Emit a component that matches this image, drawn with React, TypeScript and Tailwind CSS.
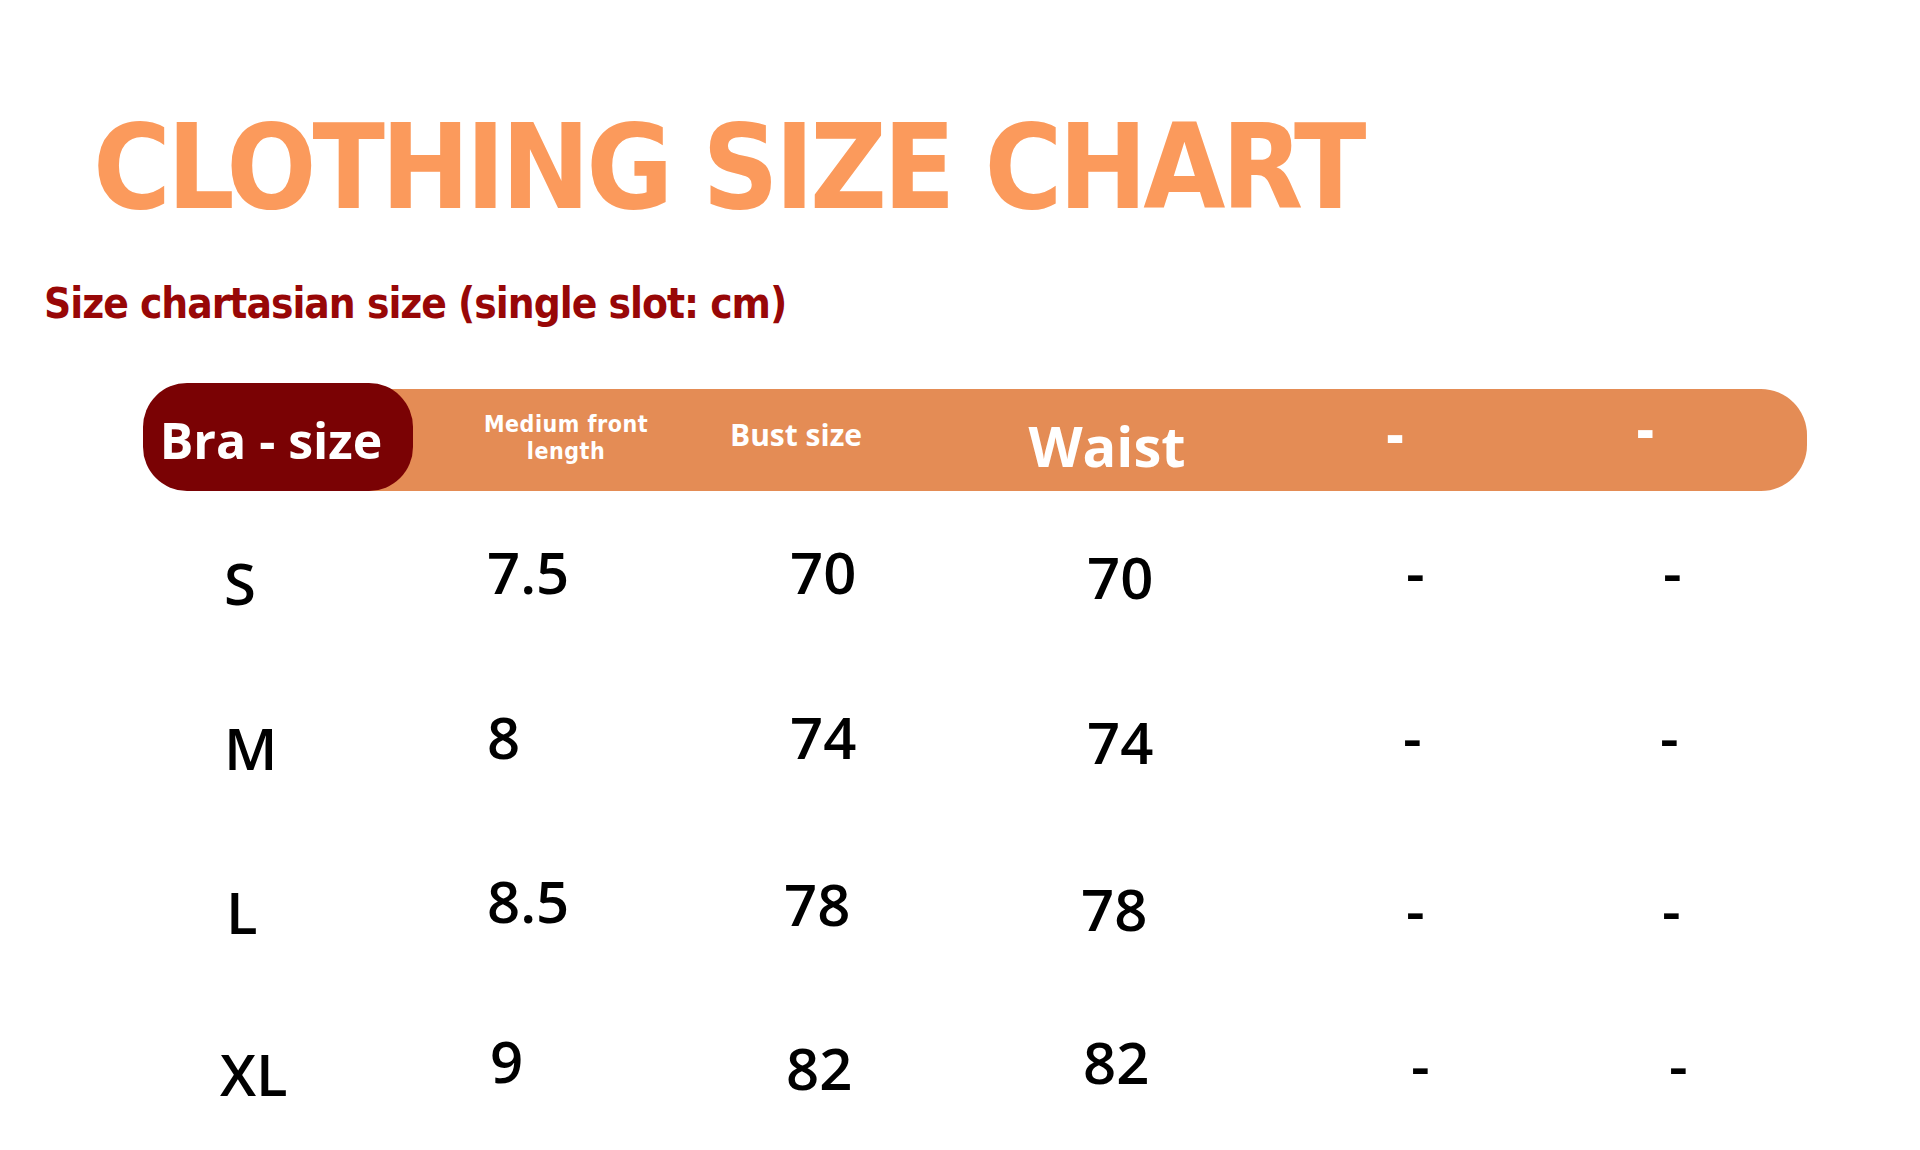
const condensed = "font-['DejaVu_Sans_Condensed','DejaVu_Sans',sans-serif] [font-stretch:semi-condensed]";
const open = "font-['Open_Sans','Noto_Sans',sans-serif]";

type Cell = { text: string; cls: string };

const rows: Cell[][] = [
  [
    { text: "S", cls: "w-[263px] pt-[33px]" },
    { text: "7.5", cls: "w-[303px] pt-[22px]" },
    { text: "70", cls: "w-[297px] pt-[22px]" },
    { text: "70", cls: "w-[319px] pt-[27px]" },
    { text: "-", cls: "w-[257px] pt-[22px]" },
    { text: "-", cls: "w-[120px] pt-[22px]" },
  ],
  [
    { text: "M", cls: "w-[263px] pt-[34px]" },
    { text: "8", cls: "w-[303px] pt-[23px]" },
    { text: "74", cls: "w-[297px] pt-[23px]" },
    { text: "74", cls: "w-[319px] pt-[28px]" },
    { text: "-", cls: "w-[257px] pt-[23px] -ml-[3px]" },
    { text: "-", cls: "w-[120px] pt-[23px]" },
  ],
  [
    { text: "L", cls: "w-[263px] pt-[34px] pl-[2px]" },
    { text: "8.5", cls: "w-[303px] pt-[23px]" },
    { text: "78", cls: "w-[297px] pt-[26px] -ml-[6px]" },
    { text: "78", cls: "w-[319px] pt-[31px]" },
    { text: "-", cls: "w-[257px] pt-[32px] pl-[6px]" },
    { text: "-", cls: "w-[120px] pt-[32px] pl-[5px]" },
  ],
  [
    { text: "XL", cls: "w-[263px] pt-[32px] -ml-[4px]" },
    { text: "9", cls: "w-[303px] pt-[19px] pl-[7px]" },
    { text: "82", cls: "w-[297px] pt-[26px]" },
    { text: "82", cls: "w-[319px] pt-[20px]" },
    { text: "-", cls: "w-[257px] pt-[23px] pl-[9px]" },
    { text: "-", cls: "w-[120px] pt-[23px] pl-[10px]" },
  ],
];

const App = () => {
  return (
    <div className="w-[1920px] h-[1150px] bg-white overflow-hidden flex flex-col">
      <h1 className={`${condensed} font-bold text-[118px] leading-none tracking-[-4px] text-[#fb9a5c] pl-[93px] pt-[108px]`}>
        CLOTHING SIZE CHART
      </h1>
      <div className={`${condensed} font-bold text-[42px] leading-none tracking-[-1px] text-[#980707] pl-[44px] mt-[57px]`}>
        Size chartasian size (single slot: cm)
      </div>

      <div className="ml-[143px] mt-[58px] w-[1664px] h-[108px] flex items-end">
        <div className={`${open} relative z-10 shrink-0 w-[270px] h-[108px] rounded-[44px] bg-[#7a0204] text-white font-bold text-[50px] flex items-center justify-center pr-[14px] pt-[6px]`}>
          Bra - size
        </div>
        <div className={`${open} -ml-[60px] pl-[60px] h-[102px] flex-1 min-w-0 bg-[#e48c55] rounded-r-[46px] flex items-center text-white font-bold`}>
          <div className={`${condensed} w-[306px] shrink-0 text-center text-[23px] leading-[27px] tracking-[0.5px] -mt-[4px]`}>
            <div>Medium front</div>
            <div>length</div>
          </div>
          <div className="w-[154px] shrink-0 text-center text-[30px] -mt-[12px]">Bust size</div>
          <div className="w-[468px] shrink-0 text-center text-[56px] pt-[10px]">Waist</div>
          <div className="w-[108px] shrink-0 text-center text-[52px] font-extrabold -mt-[14px]">-</div>
          <div className="w-[260px] shrink-0 text-left pl-[188px] text-[52px] font-extrabold -mt-[24px]">-</div>
        </div>
      </div>

      <div className={`${open} mt-[30px] flex flex-col text-black font-semibold text-[58px] leading-none`}>
        {rows.map((row, i) => (
          <div key={i} className="h-[164px] flex items-start pl-[224px]">
            {row.map((c, j) => (
              <div key={j} className={`shrink-0 ${c.cls}`}>
                {c.text}
              </div>
            ))}
          </div>
        ))}
      </div>
    </div>
  );
};

export default App;
